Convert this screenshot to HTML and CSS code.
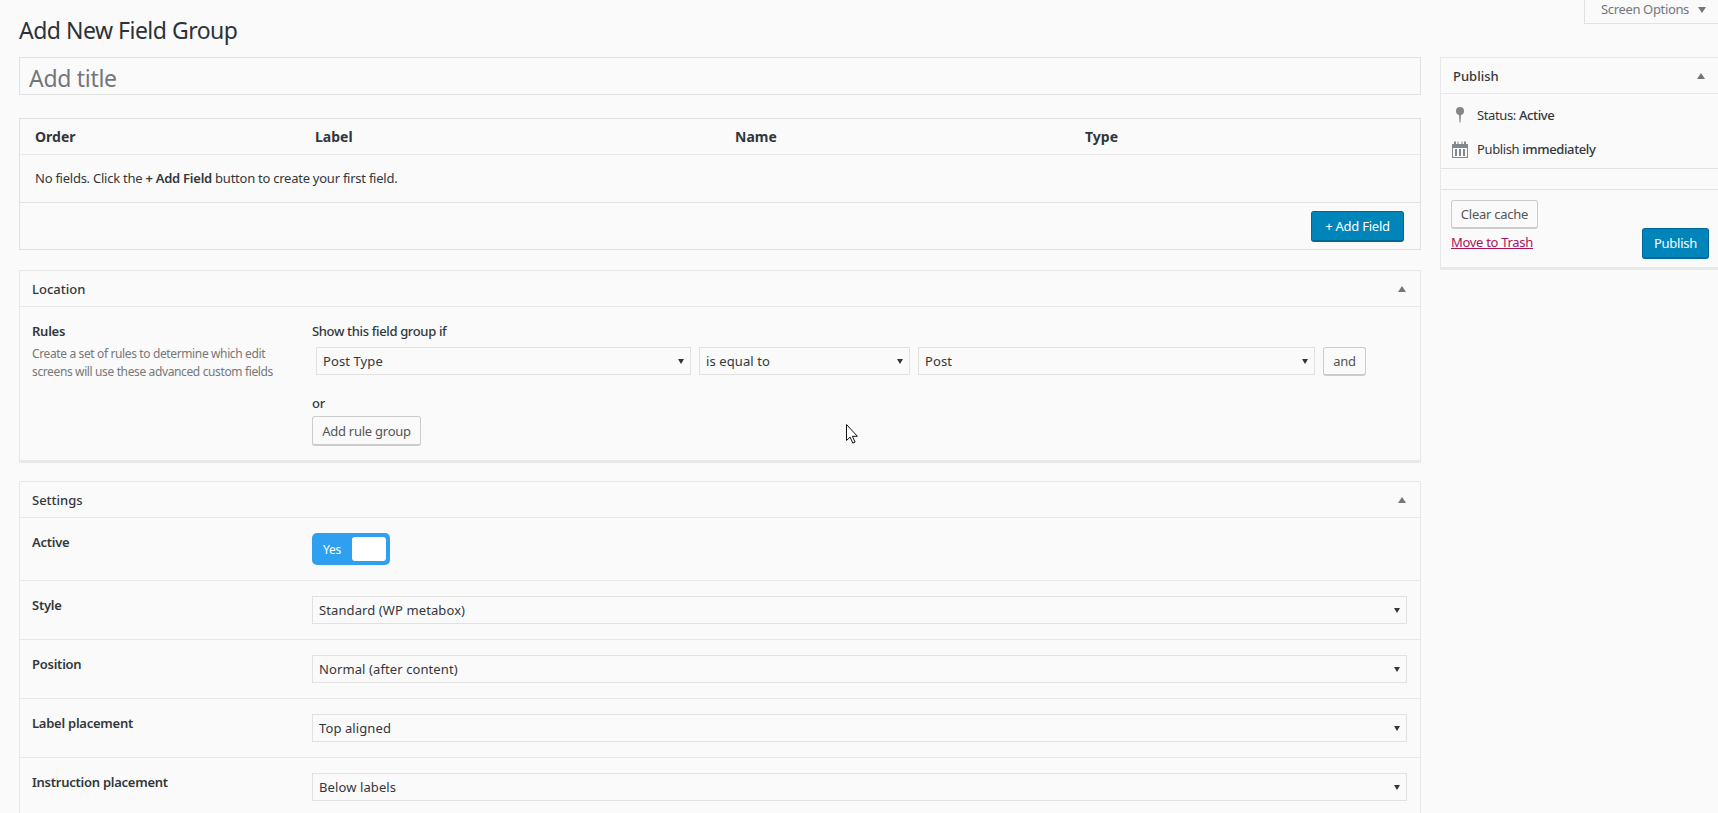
FILE: index.html
```html
<!DOCTYPE html>
<html lang="en">
<head>
    <meta charset="UTF-8">
    <meta name="viewport" content="width=device-width, initial-scale=1.0">
    <title>Add New Field Group</title>
    <link rel="stylesheet" href="styles.css">
</head>
<body>
    <div class="page">

        <!-- Main column -->
        <div class="main">
            <h1 class="page-title">Add New Field Group</h1>
            <input class="title-input" type="text" placeholder="Add title">

            <!-- Fields table -->
            <div class="fields-box">
                <div class="fields-head">
                    <span class="col-order">Order</span>
                    <span class="col-label">Label</span>
                    <span class="col-name">Name</span>
                    <span class="col-type">Type</span>
                </div>
                <div class="fields-empty">No fields. Click the <b>+ Add Field</b> button to create your first field.</div>
                <div class="fields-foot">
                    <button class="btn btn-primary btn-add">+ Add Field</button>
                </div>
            </div>

            <!-- Location -->
            <div class="postbox location-box">
                <div class="postbox-head">
                    <span>Location</span>
                    <i class="arrow-up"></i>
                </div>
                <div class="location-body">
                    <div class="rules-info">
                        <div class="field-label">Rules</div>
                        <p class="field-desc">Create a set of rules to determine which edit screens will use these advanced custom fields</p>
                    </div>
                    <div class="rules-main">
                        <div class="rules-title">Show this field group if</div>
                        <div class="rule-row">
                            <div class="select select-param">Post Type</div>
                            <div class="select select-op">is equal to</div>
                            <div class="select select-value">Post</div>
                            <button class="btn btn-and">and</button>
                        </div>
                        <div class="rules-or">or</div>
                        <button class="btn btn-group">Add rule group</button>
                    </div>
                </div>
            </div>

            <!-- Settings -->
            <div class="postbox settings-box">
                <div class="postbox-head">
                    <span>Settings</span>
                    <i class="arrow-up"></i>
                </div>
                <div class="setting-row setting-active">
                    <div class="field-label">Active</div>
                    <div class="toggle">
                        <span class="toggle-text">Yes</span>
                        <span class="toggle-knob"></span>
                    </div>
                </div>
                <div class="setting-row">
                    <div class="field-label">Style</div>
                    <div class="select">Standard (WP metabox)</div>
                </div>
                <div class="setting-row">
                    <div class="field-label">Position</div>
                    <div class="select">Normal (after content)</div>
                </div>
                <div class="setting-row">
                    <div class="field-label">Label placement</div>
                    <div class="select">Top aligned</div>
                </div>
                <div class="setting-row">
                    <div class="field-label">Instruction placement</div>
                    <div class="select">Below labels</div>
                </div>
            </div>
        </div>

        <!-- Sidebar -->
        <div class="side">
            <div class="screen-tab">Screen Options <i class="arrow-down"></i></div>

            <div class="postbox publish-box">
                <div class="postbox-head publish-head">
                    <span>Publish</span>
                    <i class="arrow-up"></i>
                </div>
                <div class="publish-misc">
                    <div class="misc-row">
                        <svg class="misc-icon" width="16" height="16" viewBox="0 0 16 16">
                            <circle cx="8" cy="4" r="4" fill="#82878c"/>
                            <path d="M7 7h2l-.5 8.500h-1z" fill="#82878c"/>
                        </svg>
                        <span>Status: <b>Active</b></span>
                    </div>
                    <div class="misc-row">
                        <svg class="misc-icon" width="16" height="17" viewBox="0 0 16 17">
                            <path d="M0 3h2V.5h2V3h1.500V.5h1V3h3V.5h1V3H12V.5h2V3h2v14H0zM1 7v9h14V7z" fill="#82878c"/>
                            <path d="M3 8h2v7H3zM7 8h2v7H7zM11 8h2v7h-2z" fill="#82878c"/>
                        </svg>
                        <span>Publish <b>immediately</b></span>
                    </div>
                </div>
                <div class="publish-spacer"></div>
                <div class="publish-actions">
                    <div class="publish-left">
                        <button class="btn btn-cache">Clear cache</button>
                        <a class="trash-link" href="#">Move to Trash</a>
                    </div>
                    <button class="btn btn-primary btn-publish">Publish</button>
                </div>
            </div>
        </div>
    </div>

    <!-- Mouse pointer caught in the screenshot -->
    <svg class="cursor" width="12" height="20" viewBox="0 0 12 20">
        <path d="M.5.500v16l3.600-3.400 2.700 6 2.300-1-2.700-5.800h5z" fill="#fff" stroke="#111" stroke-width="1"/>
    </svg>
</body>
</html>
```

FILE: styles.css
```css
/* Page base */
html, body {
    margin: 0;
    height: 813px;
    overflow: hidden;
}

body {
    background: #fafafa;
    color: #32373c;
    font-family: "Noto Sans", sans-serif;
    font-size: 13px;
    line-height: 20px;
    letter-spacing: -0.25px;
}

.page {
    display: flex;
    gap: 19px;
    padding-left: 19px;
}

.main {
    width: 1402px;
    flex: none;
}

.side {
    flex: 1;
    display: flex;
    flex-direction: column;
}

/* Heading and title */
.page-title {
    margin: 0;
    height: 57px;
    box-sizing: border-box;
    padding-top: 13px;
    font-size: 23px;
    line-height: 34px;
    font-weight: 400;
    color: #2d3238;
    letter-spacing: -0.5px;
}

.title-input {
    display: block;
    width: 100%;
    height: 38px;
    box-sizing: border-box;
    margin-bottom: 23px;
    padding: 3px 9px 0;
    background: transparent;
    border: 1px solid #e1e1e1;
    font-family: inherit;
    font-size: 23px;
    letter-spacing: -0.3px;
}

.title-input::placeholder {
    color: #72777c;
    opacity: 1;
}

/* Fields table */
.fields-box {
    height: 132px;
    box-sizing: border-box;
    margin-bottom: 20px;
    border: 1px solid #e1e1e1;
}

.fields-head {
    display: grid;
    grid-template-columns: 280px 420px 350px 1fr;
    height: 36px;
    box-sizing: border-box;
    padding: 8px 0 0 14px;
    margin-left: 1px;
    border-bottom: 1px solid #e8e8e8;
    font-weight: 700;
    font-size: 14px;
    letter-spacing: 0;
}

.fields-empty {
    height: 48px;
    box-sizing: border-box;
    padding: 13px 0 0 15px;
    border-bottom: 1px solid #e1e1e1;
}

.fields-empty b {
    font-weight: 600;
}

.fields-foot {
    display: flex;
    justify-content: flex-end;
    padding: 8px 16px 0 0;
}

/* Buttons */
.btn {
    box-sizing: border-box;
    height: 28px;
    padding: 0;
    background: transparent;
    border: 1px solid #cccccc;
    border-bottom-width: 2px;
    border-radius: 3px;
    color: #555555;
    font-family: inherit;
    font-size: 13px;
    letter-spacing: -0.25px;
    text-align: center;
}

.btn-primary {
    background: #0085ba;
    border-color: #006799;
    color: #ffffff;
}

.btn-add {
    width: 93px;
    height: 31px;
}

.btn-and {
    width: 43px;
    height: 29px;
}

.btn-group {
    display: block;
    width: 109px;
    height: 30px;
    margin-top: 3px;
}

.btn-cache {
    display: block;
    width: 87px;
    height: 29px;
}

.btn-publish {
    width: 67px;
    height: 31px;
}

/* Postboxes */
.postbox {
    border: 1px solid #e8e8e8;
}

.postbox-head {
    display: flex;
    justify-content: space-between;
    align-items: center;
    height: 36px;
    box-sizing: border-box;
    padding: 0 14px 0 12px;
    border-bottom: 1px solid #e8e8e8;
    font-weight: 500;
    letter-spacing: 0;
    color: #32373c;
}

.arrow-up {
    width: 0;
    height: 0;
    border-left: 4px solid transparent;
    border-right: 4px solid transparent;
    border-bottom: 6px solid #72777c;
}

.arrow-down {
    display: inline-block;
    width: 0;
    height: 0;
    margin-left: 6px;
    vertical-align: 1px;
    border-left: 4px solid transparent;
    border-right: 4px solid transparent;
    border-top: 6px solid #72777c;
}

.field-label {
    font-weight: 600;
    color: #32373c;
}

.field-desc {
    margin: 4px 0 0;
    font-size: 12px;
    line-height: 18px;
    color: #777777;
    letter-spacing: -0.37px;
}

/* Location */
.location-box {
    height: 193px;
    box-sizing: border-box;
    margin-bottom: 18px;
    border-bottom-width: 3px;
}

.location-body {
    display: grid;
    grid-template-columns: 280px 1fr;
    padding: 14px 0 0 12px;
}

.rules-info {
    width: 265px;
}

.rules-title {
    font-weight: 500;
    margin-bottom: 6px;
    letter-spacing: -0.35px;
}

.rule-row {
    display: flex;
    gap: 8px;
    margin-left: 4px;
}

.rules-or {
    margin-top: 17px;
    font-weight: 500;
}

/* Select look-alike */
.select {
    position: relative;
    height: 28px;
    box-sizing: border-box;
    padding-left: 6px;
    border: 1px solid #e1e1e1;
    line-height: 26px;
    color: #32373c;
    letter-spacing: 0.1px;
}

.select::after {
    content: "";
    position: absolute;
    top: 11px;
    right: 6px;
    border-left: 3.500px solid transparent;
    border-right: 3.500px solid transparent;
    border-top: 5px solid #32373c;
}

.select-param {
    width: 375px;
}

.select-op {
    width: 211px;
}

.select-value {
    width: 397px;
}

/* Settings */
.settings-box {
    border-bottom: 0;
}

.setting-row {
    display: grid;
    grid-template-columns: 280px 1fr;
    height: 59px;
    box-sizing: border-box;
    padding: 14px 13px 0 12px;
    border-bottom: 1px solid #e8e8e8;
}

.setting-row .select {
    margin-top: 1px;
}

.setting-active {
    height: 63px;
}

.toggle {
    display: flex;
    align-items: center;
    justify-content: space-between;
    width: 78px;
    height: 32px;
    box-sizing: border-box;
    margin-top: 1px;
    padding: 0 4px 0 11px;
    background: #2f9ff0;
    border-radius: 5px;
}

.toggle-text {
    color: #ffffff;
    font-size: 12px;
    padding-top: 1px;
}

.toggle-knob {
    width: 34px;
    height: 24px;
    background: #ffffff;
    border-radius: 3px;
}

/* Sidebar */
.screen-tab {
    align-self: flex-end;
    width: 134px;
    height: 24px;
    box-sizing: border-box;
    margin-bottom: 33px;
    padding-left: 16px;
    border-left: 1px solid #e1e1e1;
    border-bottom: 1px solid #e1e1e1;
    line-height: 18px;
    letter-spacing: -0.35px;
    color: #72777c;
}

.publish-box {
    height: 213px;
    box-sizing: border-box;
    border-right: 0;
    border-bottom-width: 3px;
}

.publish-head {
    padding-right: 13px;
}

.publish-misc {
    height: 75px;
    box-sizing: border-box;
    padding-top: 4px;
    border-bottom: 1px solid #e1e1e1;
}

.misc-row {
    display: flex;
    align-items: center;
    height: 34px;
    padding-left: 11px;
    gap: 9px;
    letter-spacing: -0.38px;
}

.misc-row b {
    font-weight: 500;
}

.publish-spacer {
    height: 20px;
    border-bottom: 1px solid #e1e1e1;
}

.publish-actions {
    display: flex;
    justify-content: space-between;
    align-items: flex-start;
    padding: 10px 9px 0 10px;
}

.trash-link {
    display: block;
    margin-top: 3px;
    color: #a8155a;
    line-height: 20px;
    letter-spacing: -0.3px;
}

.btn-publish {
    margin-top: 28px;
}

/* Pointer overlay */
.cursor {
    position: absolute;
    left: 846px;
    top: 424px;
}
```
